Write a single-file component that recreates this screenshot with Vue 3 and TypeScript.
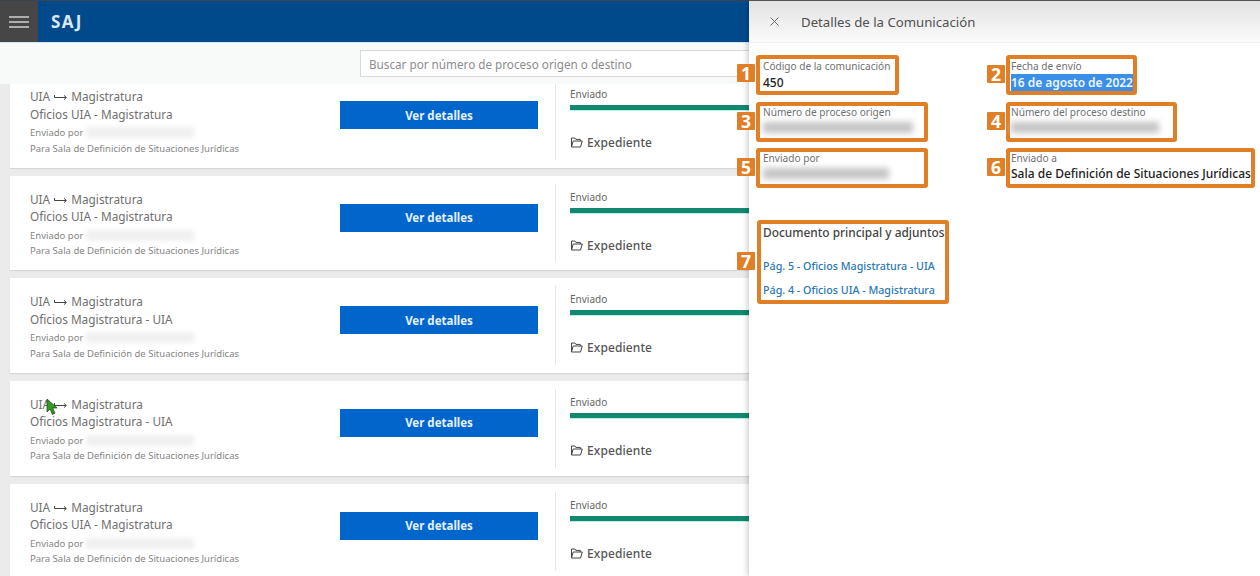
<script setup lang="ts">
interface Comm {
  route: string
  title: string
}

const comms: Comm[] = [
  { route: 'UIA', title: 'Oficios UIA - Magistratura' },
  { route: 'UIA', title: 'Oficios UIA - Magistratura' },
  { route: 'UIA', title: 'Oficios Magistratura - UIA' },
  { route: 'UIA', title: 'Oficios Magistratura - UIA' },
  { route: 'UIA', title: 'Oficios UIA - Magistratura' }
]
</script>

<template>
  <div class="page">
    <header class="topbar">
      <button class="menu-btn" aria-label="Menu">
        <svg width="20" height="12" viewBox="0 0 20 12">
          <path d="M0 1h20M0 6h20M0 11h20" stroke="#cfcfcf" stroke-width="1.6" />
        </svg>
      </button>
      <span class="brand">SAJ</span>
    </header>

    <div class="search-band">
      <input class="search" placeholder="Buscar por número de proceso origen o destino" />
    </div>

    <div class="list">
      <div class="list-inner">
        <article v-for="(c, i) in comms" :key="i" class="card">
          <div class="card-info">
            <div class="line-main">
              {{ c.route }}
              <svg class="route-arrow" width="13" height="7" viewBox="0 0 13 7">
                <path d="M.5 1v2.5H12M10 1.4l2.4 2.1L10 5.6" fill="none" stroke="#444" stroke-width="1" />
              </svg>
              Magistratura
            </div>
            <div class="line-main">{{ c.title }}</div>
            <div class="line-small line-sender">Enviado por <span class="blur-name"></span></div>
            <div class="line-small">Para Sala de Definición de Situaciones Jurídicas</div>
          </div>
          <div class="card-action">
            <button class="details-btn">Ver detalles</button>
          </div>
          <div class="card-status">
            <div class="status-label">Enviado</div>
            <div class="status-bar"></div>
            <div class="file-link">
              <svg width="13" height="11" viewBox="0 0 13 11">
                <path d="M1.5 10V1h3.4l1 1.4h4.4V4M1.5 10h9L12.3 4H3.2L1.5 10z" fill="none" stroke="#444" stroke-width="1" />
              </svg>
              Expediente
            </div>
          </div>
        </article>
      </div>
    </div>

    <svg class="cursor" width="13" height="18" viewBox="0 0 13 18">
      <path d="M1 1v13l3-3 2.4 5.4 2.6-1.2L6.6 10H11z" fill="#2f9e1f" stroke="#1c3b14" stroke-width=".7" />
    </svg>

    <aside class="drawer">
      <div class="drawer-head">
        <svg class="close" width="9" height="9" viewBox="0 0 9 9">
          <path d="M.5.5l8 8M8.5.5l-8 8" stroke="#666" stroke-width="1" />
        </svg>
        <span class="drawer-title">Detalles de la Comunicación</span>
      </div>

      <div class="fields">
        <div class="field-row">
          <div class="cell">
            <div class="field w-1">
              <span class="badge badge-top">1</span>
              <div class="field-label">Código de la comunicación</div>
              <div class="field-value first-value">450</div>
            </div>
          </div>
          <div class="cell">
            <div class="field right w-2">
              <span class="badge">2</span>
              <div class="field-label">Fecha de envío</div>
              <div class="field-value first-value"><span class="selected">16 de agosto de 2022</span></div>
            </div>
          </div>
        </div>
        <div class="field-row">
          <div class="cell">
            <div class="field tight w-3">
              <span class="badge">3</span>
              <div class="field-label">Número de proceso origen</div>
              <div class="blur-value"></div>
            </div>
          </div>
          <div class="cell">
            <div class="field tight right w-4">
              <span class="badge">4</span>
              <div class="field-label">Número del proceso destino</div>
              <div class="blur-value blur-short"></div>
            </div>
          </div>
        </div>
        <div class="field-row">
          <div class="cell">
            <div class="field tight w-3">
              <span class="badge">5</span>
              <div class="field-label">Enviado por</div>
              <div class="blur-value blur-name-value"></div>
            </div>
          </div>
          <div class="cell">
            <div class="field tight right w-6">
              <span class="badge">6</span>
              <div class="field-label">Enviado a</div>
              <div class="field-value last-value">Sala de Definición de Situaciones Jurídicas</div>
            </div>
          </div>
        </div>

        <div class="docs">
          <span class="badge badge-docs">7</span>
          <div class="docs-title">Documento principal y adjuntos</div>
          <a class="doc-link doc-first">Pág. 5 - Oficios Magistratura - UIA</a>
          <a class="doc-link">Pág. 4 - Oficios UIA - Magistratura</a>
        </div>
      </div>
    </aside>
  </div>
</template>

<style>
html,
body {
  margin: 0;
  overflow: hidden;
}
</style>

<style scoped>
.page {
  position: relative;
  width: 1260px;
  height: 576px;
  overflow: hidden;
  background: #ebebeb;
  font-family: 'Noto Sans', 'Open Sans', sans-serif;
  color: #555;
}

.topbar {
  display: flex;
  align-items: center;
  height: 42px;
  background: #004a8c;
  border-top: 1px solid #3a4450;
  box-sizing: border-box;
  box-shadow: 0 1px 0 #cfe8f4;
}

.menu-btn {
  display: flex;
  align-items: center;
  justify-content: center;
  width: 38px;
  height: 100%;
  padding: 0;
  border: none;
  background: #464646;
}

.brand {
  margin-left: 13px;
  font-size: 17px;
  font-weight: 700;
  letter-spacing: 1.4px;
  color: #dbe8f2;
}

.search-band {
  display: flex;
  height: 41px;
  margin-top: 1px;
  padding: 7px 0 0 360px;
  box-sizing: border-box;
  background: #f8f9f9;
}

.search {
  width: 420px;
  height: 27px;
  padding: 1px 8px 0;
  box-sizing: border-box;
  border: 1px solid #d9d9d9;
  background: #fff;
  font-family: inherit;
  font-size: 11.7px;
  outline: none;
}

.search::placeholder {
  color: #8c8c8c;
}

.list {
  height: 492px;
  overflow: hidden;
}

.list-inner {
  display: flex;
  flex-direction: column;
  gap: 8px;
  margin-top: -11px;
  padding-left: 10px;
}

.card {
  display: flex;
  flex: none;
  height: 94.67px;
  background: #fff;
  box-shadow: 0 1px 1px #d6d6d6;
}

.card-info {
  flex: none;
  width: 330px;
  padding: 15px 0 0 20px;
  box-sizing: border-box;
}

.line-main {
  height: 17.5px;
  font-size: 11.8px;
  line-height: 17.5px;
  color: #707070;
  white-space: nowrap;
}

.route-arrow {
  margin: 0 1px;
  vertical-align: 0;
}

.line-small {
  height: 15.5px;
  font-size: 9.5px;
  line-height: 15.5px;
  color: #858585;
  white-space: nowrap;
}

.line-sender {
  margin-top: 2px;
}

.blur-name {
  display: inline-block;
  width: 108px;
  height: 11px;
  vertical-align: -2px;
  background: #f0f0f0;
  filter: blur(2px);
}

.card-action {
  flex: none;
  width: 215px;
  padding-top: 28px;
  box-sizing: border-box;
}

.details-btn {
  width: 198px;
  height: 28px;
  padding: 0;
  border: none;
  background: #0066cc;
  color: #e6f1fb;
  font-family: inherit;
  font-size: 11.5px;
  font-weight: 700;
}

.card-status {
  flex: 1;
  margin: 8px 0;
  padding: 7px 0 0 14px;
  border-left: 1px solid #e6e6e6;
}

.status-label {
  height: 15px;
  font-size: 10px;
  line-height: 12px;
  color: #666;
}

.status-bar {
  width: 300px;
  height: 5px;
  margin-top: 2px;
  background: #12896e;
  box-shadow: 0 1px 0 #b6f1e3;
}

.file-link {
  display: flex;
  align-items: center;
  gap: 4px;
  margin-top: 24px;
  font-size: 12px;
  font-weight: 500;
  letter-spacing: 0.1px;
  color: #555;
}

.cursor {
  position: absolute;
  left: 46px;
  top: 398px;
}

.drawer {
  position: absolute;
  top: 0;
  left: 749px;
  width: 511px;
  height: 576px;
  background: #fff;
  box-shadow: -2px 0 5px rgba(0, 0, 0, 0.18);
}

.drawer-head {
  display: flex;
  align-items: center;
  height: 43px;
  padding-left: 21px;
  box-sizing: border-box;
  border-top: 1px solid #555;
  border-bottom: 1px solid #f0f0f0;
  background: linear-gradient(#e2e2e2, #fbfbfb);
}

.drawer-title {
  margin-left: 22px;
  font-size: 13.2px;
  color: #505050;
}

.fields {
  padding: 12px 0 0 7px;
}

.field-row {
  display: flex;
  height: 46.5px;
}

.cell {
  width: 250px;
}

.field {
  position: relative;
  height: 40px;
  padding: 0 0 0 3px;
  box-sizing: border-box;
  border: 4px solid #e07f26;
  border-radius: 3px;
  background: #fff;
}

.right {
  padding-left: 1px;
}

.w-1 {
  width: 143px;
}

.w-2 {
  width: 131px;
}

.w-3 {
  width: 172px;
}

.w-4 {
  width: 171px;
}

.w-6 {
  width: 249px;
}

.tight .field-label {
  margin-top: -1px;
}

.badge {
  position: absolute;
  top: 6px;
  left: -23px;
  width: 18px;
  height: 18px;
  border-radius: 1px;
  background: #e07f26;
  color: #fff;
  font-size: 17.5px;
  font-weight: 700;
  line-height: 18px;
  text-align: center;
}

.badge-top {
  top: 5px;
}

.field-label {
  height: 14px;
  font-size: 10.1px;
  line-height: 14px;
  color: #707070;
  white-space: nowrap;
}

.field-value {
  height: 16px;
  font-size: 12px;
  font-weight: 500;
  line-height: 16px;
  color: #222;
  white-space: nowrap;
}

.first-value {
  margin-top: 2px;
}

.last-value {
  margin-top: 1px;
}

.selected {
  background: #3b8fe6;
  color: #eef6ff;
  font-weight: 600;
  letter-spacing: -0.05px;
}

.blur-value {
  width: 150px;
  height: 11px;
  margin-top: 3px;
  background: #c4c4c4;
  filter: blur(3px);
}

.blur-short {
  width: 148px;
}

.blur-name-value {
  width: 126px;
}

.docs {
  position: relative;
  width: 192px;
  height: 84px;
  margin: 25.5px 0 0 1px;
  padding: 0 0 0 2px;
  box-sizing: border-box;
  border: 4px solid #e07f26;
  border-radius: 3px;
}

.badge-docs {
  top: 28px;
  left: -24px;
}

.docs-title {
  height: 18px;
  margin-top: -1px;
  font-size: 11.9px;
  font-weight: 500;
  line-height: 18px;
  color: #444;
  white-space: nowrap;
}

.doc-link {
  display: block;
  height: 24px;
  font-size: 10.7px;
  font-weight: 500;
  line-height: 24px;
  color: #2a78b4;
  white-space: nowrap;
}

.doc-first {
  margin-top: 13px;
}
</style>
